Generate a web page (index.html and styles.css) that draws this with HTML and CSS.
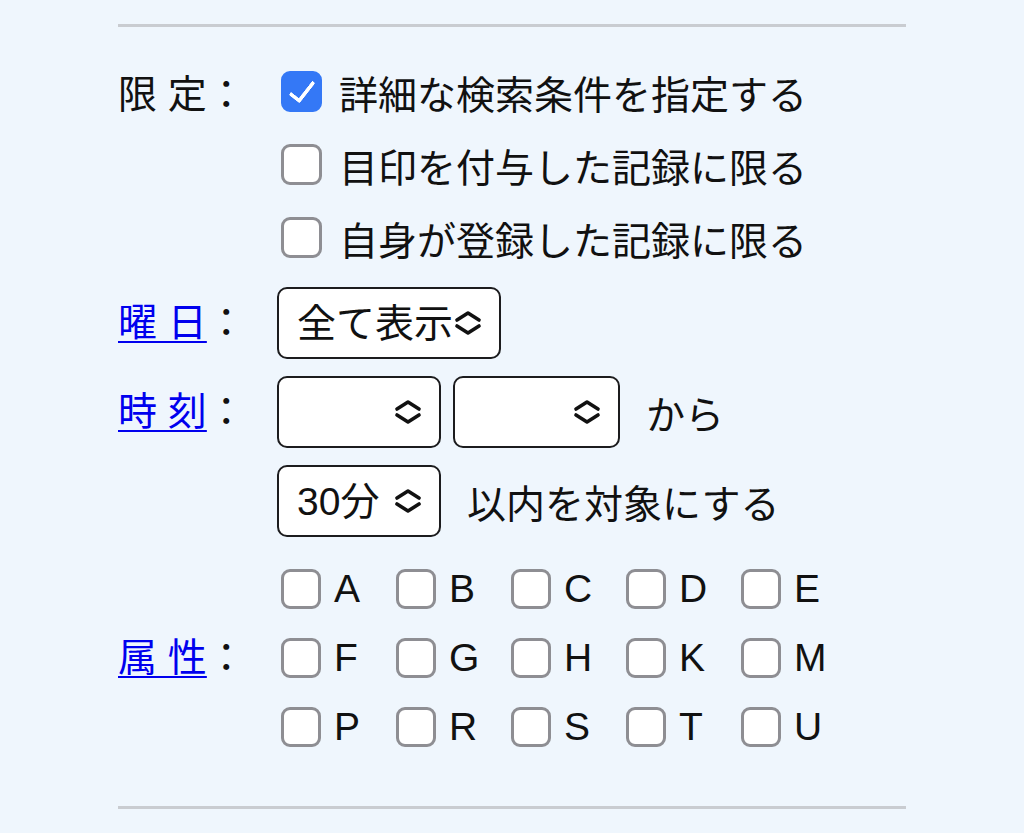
FILE: index.html
```html
<!DOCTYPE html>
<html lang="ja">
<head>
    <meta charset="UTF-8">
    <meta name="viewport" content="width=device-width, initial-scale=1.0">
    <title>検索条件</title>
    <link rel="stylesheet" href="styles.css">
</head>
<body>
    <div class="panel">
        <hr class="rule">

        <div class="form">
            <div class="row limit">
                <div class="label">限 定：</div>
                <div class="field">
                    <label class="check-line"><input type="checkbox" checked><span>詳細な検索条件を指定する</span></label>
                    <label class="check-line"><input type="checkbox"><span>目印を付与した記録に限る</span></label>
                    <label class="check-line"><input type="checkbox"><span>自身が登録した記録に限る</span></label>
                </div>
            </div>

            <div class="row">
                <div class="label select-label"><a href="#">曜 日</a>：</div>
                <div class="field">
                    <div class="select-line">
                        <span class="select wide">
                            <select><option>全て表示</option></select>
                            <svg viewBox="0 0 28 26"><path d="M3 10 L14 3 L25 10 M3 16 L14 23 L25 16"/></svg>
                        </span>
                    </div>
                </div>
            </div>

            <div class="row">
                <div class="label select-label"><a href="#">時 刻</a>：</div>
                <div class="field">
                    <div class="select-line">
                        <span class="select narrow">
                            <select><option></option></select>
                            <svg viewBox="0 0 28 26"><path d="M3 10 L14 3 L25 10 M3 16 L14 23 L25 16"/></svg>
                        </span>
                        <span class="select narrow second">
                            <select><option></option></select>
                            <svg viewBox="0 0 28 26"><path d="M3 10 L14 3 L25 10 M3 16 L14 23 L25 16"/></svg>
                        </span>
                        <span class="after">から</span>
                    </div>
                    <div class="select-line">
                        <span class="select narrow">
                            <select><option>30分</option></select>
                            <svg viewBox="0 0 28 26"><path d="M3 10 L14 3 L25 10 M3 16 L14 23 L25 16"/></svg>
                        </span>
                        <span class="after">以内を対象にする</span>
                    </div>
                </div>
            </div>

            <div class="row attrs">
                <div class="label"><a href="#">属 性</a>：</div>
                <div class="field">
                    <div class="attr-grid">
                        <label class="attr"><input type="checkbox"><span>A</span></label>
                        <label class="attr"><input type="checkbox"><span>B</span></label>
                        <label class="attr"><input type="checkbox"><span>C</span></label>
                        <label class="attr"><input type="checkbox"><span>D</span></label>
                        <label class="attr"><input type="checkbox"><span>E</span></label>
                        <label class="attr"><input type="checkbox"><span>F</span></label>
                        <label class="attr"><input type="checkbox"><span>G</span></label>
                        <label class="attr"><input type="checkbox"><span>H</span></label>
                        <label class="attr"><input type="checkbox"><span>K</span></label>
                        <label class="attr"><input type="checkbox"><span>M</span></label>
                        <label class="attr"><input type="checkbox"><span>P</span></label>
                        <label class="attr"><input type="checkbox"><span>R</span></label>
                        <label class="attr"><input type="checkbox"><span>S</span></label>
                        <label class="attr"><input type="checkbox"><span>T</span></label>
                        <label class="attr"><input type="checkbox"><span>U</span></label>
                    </div>
                </div>
            </div>
        </div>

        <hr class="rule">
    </div>
</body>
</html>
```

FILE: styles.css
```css
body {
    margin: 0;
    background-color: #eff6fd;
    font-family: "Liberation Sans", "Noto Sans CJK JP", sans-serif;
    font-size: 39px;
    color: #111;
}
.panel {
    width: 788px;
    margin-left: 118px;
    padding-top: 24px;
}
.rule {
    height: 3px;
    margin: 0;
    border: none;
    background-color: #c9ccd1;
}
.form {
    padding: 28px 0 45px;
}
.row {
    display: flex;
    align-items: flex-start;
}
.label {
    width: 159px;
    flex: none;
    line-height: 73px;
    white-space: pre;
}
.limit .label {
    padding-top: 3px;
}
.label a {
    color: #0000ee;
    text-decoration: underline;
    text-decoration-thickness: 2px;
    text-underline-offset: 5px;
}
.select-label {
    line-height: 72px;
}
.field {
    flex: 1;
}

/* checkboxes */
input[type="checkbox"] {
    appearance: none;
    -webkit-appearance: none;
    box-sizing: border-box;
    width: 41px;
    height: 41px;
    margin: 0 0 0 4px;
    border: 3px solid #8e8e93;
    border-radius: 9px;
    background-color: #fff;
    display: grid;
    place-content: center;
    flex: none;
}
input[type="checkbox"]:checked {
    background-color: #3478f6;
    border-color: #3478f6;
}
input[type="checkbox"]:checked::before {
    content: "";
    width: 10px;
    height: 22px;
    border-right: 4.5px solid #fff;
    border-bottom: 4.5px solid #fff;
    border-radius: 2px;
    transform: translate(0, -3px) rotate(38deg);
}
.check-line {
    display: flex;
    align-items: center;
    gap: 17px;
    height: 73px;
}
.check-line:last-child {
    margin-bottom: 13px;
}

/* selects */
.select-line {
    display: flex;
    align-items: center;
    height: 72px;
    margin-bottom: 17px;
}
.select {
    display: inline-flex;
    align-items: center;
    box-sizing: border-box;
    height: 72px;
    padding-right: 17px;
    border: 2.5px solid #1c1c1e;
    border-radius: 10px;
    background-color: #fff;
}
.select select {
    appearance: none;
    -webkit-appearance: none;
    flex: 1;
    min-width: 0;
    height: 100%;
    padding: 0 0 0 18px;
    border: none;
    background: transparent;
    font: inherit;
    color: #111;
    outline: none;
}
.select svg {
    width: 28px;
    height: 26px;
    flex: none;
    fill: none;
    stroke: #111;
    stroke-width: 3.6;
    stroke-linecap: round;
    stroke-linejoin: round;
}
.select.wide {
    width: 224px;
}
.select.narrow {
    width: 164px;
}
.select.second {
    width: 167px;
    margin-left: 12px;
}
.after {
    margin-left: 26px;
}

/* attributes */
.attrs {
    align-items: center;
}
.attrs .label {
    line-height: 69px;
}
.attr-grid {
    display: grid;
    grid-template-columns: repeat(5, 115px);
    grid-auto-rows: 69px;
}
.attr {
    display: flex;
    align-items: center;
    gap: 13px;
}
.attr input[type="checkbox"] {
    width: 40px;
    height: 40px;
}
```
